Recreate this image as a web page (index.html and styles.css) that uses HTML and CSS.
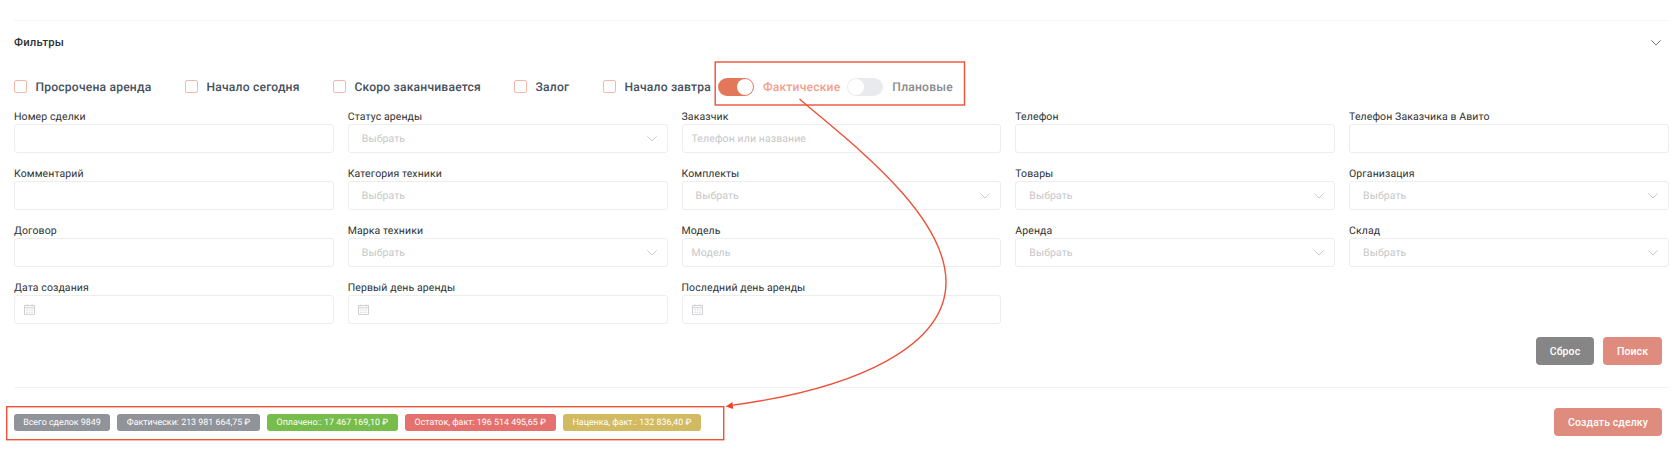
FILE: index.html
```
<!DOCTYPE html>
<html lang="ru">
<head>
  <meta charset="UTF-8">
  <meta name="viewport" content="width=device-width, initial-scale=1.0">
  <title>Сделки</title>
  <link rel="stylesheet" href="styles.css">
</head>
<body>

  <!-- Shared icons -->
  <svg class="icon-defs" width="0" height="0">
    <symbol id="icon-arrow" viewBox="0 0 10 6">
      <path d="M0.6 0.6 L5 5 L9.4 0.6" fill="none" stroke="currentColor" stroke-linecap="round" stroke-linejoin="round"/>
    </symbol>
    <symbol id="icon-date" viewBox="0 0 11 11">
      <path d="M0.5 1.5 H10.5 V10.4 H0.5 Z M0.5 3.8 H10.5 M3 0.3 V2.4 M8 0.3 V2.4" fill="none" stroke="currentColor"/>
      <path d="M2.3 6 H8.8 M2.3 8.3 H8.8" fill="none" stroke="currentColor" stroke-width="0.9" stroke-dasharray="1.5 1"/>
    </symbol>
  </svg>

  <div class="page">
    <!-- Filters -->
    <section class="filters">
      <div class="filters-header">
        <span class="filters-title">Фильтры</span>
        <svg class="collapse-icon"><use href="#icon-arrow"/></svg>
      </div>

      <div class="checks">
        <label class="check check-1"><span class="box"></span><span class="check-text">Просрочена аренда</span></label>
        <label class="check check-2"><span class="box"></span><span class="check-text">Начало сегодня</span></label>
        <label class="check check-3"><span class="box"></span><span class="check-text">Скоро заканчивается</span></label>
        <label class="check check-4"><span class="box"></span><span class="check-text">Залог</span></label>
        <label class="check check-5"><span class="box"></span><span class="check-text">Начало завтра</span></label>
        <div class="switches">
          <label class="switch-item switch-on"><span class="switch"></span><span class="check-text">Фактические</span></label>
          <label class="switch-item"><span class="switch"></span><span class="check-text">Плановые</span></label>
        </div>
      </div>

      <div class="fields">
        <div class="field"><div class="label">Номер сделки</div><div class="input"></div></div>
        <div class="field"><div class="label">Статус аренды</div><div class="input select">Выбрать<svg class="arrow"><use href="#icon-arrow"/></svg></div></div>
        <div class="field"><div class="label">Заказчик</div><div class="input">Телефон или название</div></div>
        <div class="field"><div class="label">Телефон</div><div class="input"></div></div>
        <div class="field"><div class="label">Телефон Заказчика в Авито</div><div class="input"></div></div>

        <div class="field"><div class="label">Комментарий</div><div class="input"></div></div>
        <div class="field"><div class="label">Категория техники</div><div class="input select">Выбрать</div></div>
        <div class="field"><div class="label">Комплекты</div><div class="input select">Выбрать<svg class="arrow"><use href="#icon-arrow"/></svg></div></div>
        <div class="field"><div class="label">Товары</div><div class="input select">Выбрать<svg class="arrow"><use href="#icon-arrow"/></svg></div></div>
        <div class="field"><div class="label">Организация</div><div class="input select">Выбрать<svg class="arrow"><use href="#icon-arrow"/></svg></div></div>

        <div class="field"><div class="label">Договор</div><div class="input"></div></div>
        <div class="field"><div class="label">Марка техники</div><div class="input select">Выбрать<svg class="arrow"><use href="#icon-arrow"/></svg></div></div>
        <div class="field"><div class="label">Модель</div><div class="input">Модель</div></div>
        <div class="field"><div class="label">Аренда</div><div class="input select">Выбрать<svg class="arrow"><use href="#icon-arrow"/></svg></div></div>
        <div class="field"><div class="label">Склад</div><div class="input select">Выбрать<svg class="arrow"><use href="#icon-arrow"/></svg></div></div>

        <div class="field"><div class="label">Дата создания</div><div class="input"><svg class="date"><use href="#icon-date"/></svg></div></div>
        <div class="field"><div class="label">Первый день аренды</div><div class="input"><svg class="date"><use href="#icon-date"/></svg></div></div>
        <div class="field"><div class="label">Последний день аренды</div><div class="input"><svg class="date"><use href="#icon-date"/></svg></div></div>
      </div>

      <div class="actions">
        <button type="button" class="button button-gray">Сброс</button>
        <button type="button" class="button">Поиск</button>
      </div>
    </section>

    <!-- Totals -->
    <section class="summary">
      <div class="tags">
        <span class="tag tag-total">Всего сделок 9849</span>
        <span class="tag tag-fact">Фактически: 213 981 664,75 ₽</span>
        <span class="tag tag-paid">Оплачено:: 17 467 169,10 ₽</span>
        <span class="tag tag-rest">Остаток, факт: 196 514 495,65 ₽</span>
        <span class="tag tag-markup">Наценка, факт.: 132 836,40 ₽</span>
      </div>
      <button type="button" class="button button-create">Создать сделку</button>
    </section>
  </div>

  <!-- Red callouts over the page -->
  <svg class="callouts" width="1680" height="451" viewBox="0 0 1680 451">
    <rect x="715.2" y="62" width="249.3" height="43"/>
    <rect x="6.7" y="406.7" width="717" height="33"/>
    <path d="M799.5 99 C843 137 946 212 946 282 C946 345 860 388 731 405.4"/>
    <path class="head" d="M725.7 406.4 L732.4 402 L733.2 409 Z"/>
  </svg>

</body>
</html>
```

FILE: styles.css
```
/* General styles for the page */
* {
  box-sizing: border-box;
}

body {
  margin: 0;
  background-color: #fff;
  font-family: Roboto, "Liberation Sans", sans-serif;
  font-size: 10.5px;
  text-rendering: geometricPrecision;
  color: #303133;
}

.icon-defs {
  position: absolute;
}

.page {
  padding: 20px 11px 0 14px;
}

/* Filters */
.filters {
  height: 368px;
  border-top: 1px solid #f5f5f6;
  border-bottom: 1px solid #f3f3f4;
}

.filters-header {
  display: flex;
  justify-content: space-between;
  align-items: center;
  height: 43px;
  padding-right: 8px;
}

.filters-title {
  line-height: 13px;
  font-size: 11.3px;
  font-weight: 500;
  letter-spacing: 0.2px;
}

.collapse-icon {
  width: 10px;
  height: 6px;
  color: #77797d;
}

/* Checkboxes and switches */
.checks {
  display: flex;
  align-items: center;
  height: 45px;
  margin: 0 0 1px -0.5px;
  white-space: nowrap;
}

.check {
  display: flex;
  align-items: center;
  gap: 9px;
}

.check-1 {
  width: 171px;
}

.check-2 {
  width: 148px;
}

.check-3 {
  width: 181px;
}

.check-4 {
  width: 89px;
}

.check-5 {
  width: 115.4px;
}

.box {
  width: 13px;
  height: 13px;
  border: 1px solid #f6b9a8;
  border-radius: 2px;
}

.check-text {
  font-size: 12.1px;
  font-weight: 500;
  letter-spacing: 0.2px;
  color: #46505c;
}

.switches {
  display: flex;
  gap: 7px;
}

.switch-item {
  display: flex;
  align-items: center;
  gap: 9px;
}

.switch-item .check-text {
  color: #8a8a8b;
}

.switch-on .check-text {
  color: #f2a18c;
}

.switch {
  display: flex;
  width: 36px;
  height: 18px;
  padding: 1px;
  border-radius: 9px;
  background-color: #e9eaee;
}

.switch::before {
  content: "";
  width: 16px;
  height: 16px;
  border-radius: 50%;
  background-color: #fff;
}

.switch-on .switch {
  justify-content: flex-end;
  background-color: #e3775a;
}

/* Filter fields */
.fields {
  display: grid;
  grid-template-columns: repeat(5, 1fr);
  column-gap: 13.8px;
}

.field {
  height: 57px;
}

.label {
  height: 14px;
  line-height: 14px;
  letter-spacing: 0.1px;
}

.input {
  display: flex;
  align-items: center;
  height: 29px;
  padding: 0 9px;
  border: 1px solid #ededee;
  border-radius: 3px;
  color: #c6c7c9;
  letter-spacing: 0.1px;
}

.select {
  justify-content: space-between;
  padding: 0 10px 0 13px;
}

.arrow {
  width: 10px;
  height: 6px;
  color: #c9cbd0;
}

.date {
  width: 11px;
  height: 11px;
  color: #cfd0d6;
}

/* Buttons */
.actions {
  display: flex;
  justify-content: flex-end;
  gap: 9px;
  padding-right: 7px;
  margin-top: -1px;
}

.button {
  width: 59px;
  height: 28px;
  padding: 0;
  border: none;
  border-radius: 4px;
  background-color: #df8c7e;
  color: #fff;
  font-family: inherit;
  font-size: 10.5px;
  font-weight: 500;
  letter-spacing: 0.1px;
}

.button-gray {
  width: 58px;
  background-color: #868686;
}

.button-create {
  width: 108px;
}

/* Totals */
.summary {
  display: flex;
  justify-content: space-between;
  align-items: center;
  padding: 20px 7px 0 0;
}

.tags {
  display: flex;
  gap: 7.3px;
}

.tag {
  height: 17px;
  border-radius: 3px;
  background-color: #909399;
  color: #fff;
  font-size: 8.9px;
  line-height: 18px;
  text-align: center;
  white-space: nowrap;
}

.tag-total {
  width: 96px;
}

.tag-fact {
  width: 142.5px;
}

.tag-paid {
  width: 130.5px;
  background-color: #77bd4b;
}

.tag-rest {
  width: 150.7px;
  background-color: #e4716d;
}

.tag-markup {
  width: 138px;
  background-color: #d2ba62;
}

/* Callouts */
.callouts {
  position: absolute;
  top: 0;
  left: 0;
  fill: none;
  stroke: #ed5138;
  stroke-width: 1.4;
  pointer-events: none;
}

.callouts .head {
  fill: #ed4528;
  stroke: none;
}
```
